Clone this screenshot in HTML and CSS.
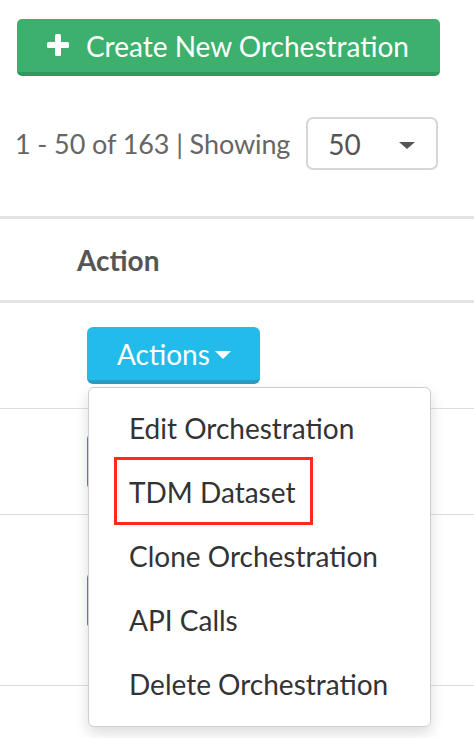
FILE: index.html
```html
<!DOCTYPE html>
<html lang="en">
<head>
<meta charset="utf-8">
<title>Orchestrations</title>
<link rel="stylesheet" href="styles.css">
</head>
<body>
<div class="toolbar">
  <button class="btn-create" type="button">
    <svg class="plus" viewBox="0 0 22 22" width="22" height="22" aria-hidden="true">
      <rect x="8" y="0" width="6" height="22" rx="1.5" fill="#fff"/>
      <rect x="0" y="8" width="22" height="6" rx="1.5" fill="#fff"/>
    </svg>
    <span>Create New Orchestration</span>
  </button>
</div>

<div class="pager">
  <span class="pager-text">1 - 50 of 163 | Showing</span>
  <div class="select">
    <span class="select-value">50</span>
    <span class="select-caret"></span>
  </div>
</div>

<div class="table">
  <div class="thead">
    <div class="th">Action</div>
  </div>
  <div class="row row-1">
    <div class="cell">
      <div class="dropdown">
        <button class="btn-actions" type="button">Actions<span class="caret"></span></button>
        <ul class="menu">
          <li><a>Edit Orchestration</a></li>
          <li><a><span class="highlight">TDM Dataset</span></a></li>
          <li><a>Clone Orchestration</a></li>
          <li><a>API Calls</a></li>
          <li><a>Delete Orchestration</a></li>
        </ul>
      </div>
    </div>
  </div>
  <div class="row row-2">
    <div class="cell"><button class="btn-actions btn-hidden" type="button" aria-label="Actions"></button></div>
  </div>
  <div class="row row-3">
    <div class="cell"><button class="btn-actions btn-hidden" type="button" aria-label="Actions"></button></div>
  </div>
  <div class="row row-4">
    <div class="cell"></div>
  </div>
</div>
</body>
</html>
```

FILE: styles.css
```css
html, body {
  margin: 0;
  padding: 0;
  background: #fff;
  font-family: "Lato", "Open Sans", "Liberation Sans", sans-serif;
  overflow: hidden;
}

.toolbar {
  padding: 19px 0 0 17px;
}

.btn-create {
  display: flex;
  align-items: center;
  gap: 17px;
  width: 423px;
  height: 57px;
  padding: 0 0 0 30px;
  border: 0;
  border-bottom: 4px solid #2f9a5b;
  border-radius: 5px;
  background: #3cb06c;
  color: #fff;
  font-family: inherit;
  font-size: 28px;
  line-height: 1;
  box-sizing: border-box;
}

.plus {
  flex: none;
  margin-top: -2px;
}

.pager {
  display: flex;
  align-items: center;
  gap: 16px;
  margin-top: 41px;
  padding-left: 15px;
}

.pager-text {
  font-size: 27px;
  color: #666;
  letter-spacing: -0.1px;
}

.select {
  display: flex;
  align-items: center;
  justify-content: space-between;
  width: 132px;
  height: 53px;
  box-sizing: border-box;
  border: 2px solid #d6d6d6;
  border-radius: 7px;
  padding: 0 21px 0 20px;
}

.select-value {
  font-size: 28px;
  color: #555;
}

.select-caret {
  width: 0;
  height: 0;
  border-left: 8px solid transparent;
  border-right: 8px solid transparent;
  border-top: 7px solid #555;
  margin-top: 4px;
}

.table {
  margin-top: 46px;
  border-top: 3px solid #e3e3e3;
}

.thead {
  height: 81px;
  display: flex;
  align-items: center;
  border-bottom: 3px solid #e3e3e3;
}

.th {
  padding-left: 77px;
  font-size: 28px;
  font-weight: 700;
  color: #555;
}

.row {
  display: flex;
  align-items: center;
  border-bottom: 1px solid #dedede;
}

.row-1 { height: 105px; }
.row-2 { height: 105px; }
.row-3 { height: 170px; }
.row-4 { height: 60px; border-bottom: 0; }

.cell {
  padding-left: 87px;
}

.dropdown {
  position: relative;
}

.btn-actions {
  display: flex;
  align-items: center;
  height: 57px;
  width: 173px;
  padding: 0 0 0 30px;
  border: 0;
  border-bottom: 4px solid #2a9dc2;
  border-radius: 6px;
  background: #22bbea;
  color: #fff;
  font-family: inherit;
  font-size: 28px;
  line-height: 1;
  box-sizing: border-box;
}

.btn-hidden {
  background: #1f9fc8;
}

.caret {
  display: inline-block;
  width: 0;
  height: 0;
  border-left: 8px solid transparent;
  border-right: 8px solid transparent;
  border-top: 8px solid #fff;
  margin-left: 5px;
  margin-top: 3px;
}

.menu {
  position: absolute;
  top: 60px;
  left: 1px;
  width: 343px;
  height: 340px;
  box-sizing: border-box;
  margin: 0;
  padding: 8px 0 0 0;
  list-style: none;
  background: #fff;
  border: 1px solid #cfcfcf;
  border-radius: 6px;
  box-shadow: 0 6px 14px rgba(0, 0, 0, 0.14);
  z-index: 5;
}

.menu li a {
  display: flex;
  align-items: center;
  height: 64px;
  padding-left: 40px;
  font-size: 28px;
  color: #333;
}

.highlight {
  position: relative;
}

.highlight::after {
  content: "";
  position: absolute;
  left: -15px;
  right: -18px;
  top: -18px;
  bottom: -16px;
  border: 3px solid #ff2a1f;
}
```
